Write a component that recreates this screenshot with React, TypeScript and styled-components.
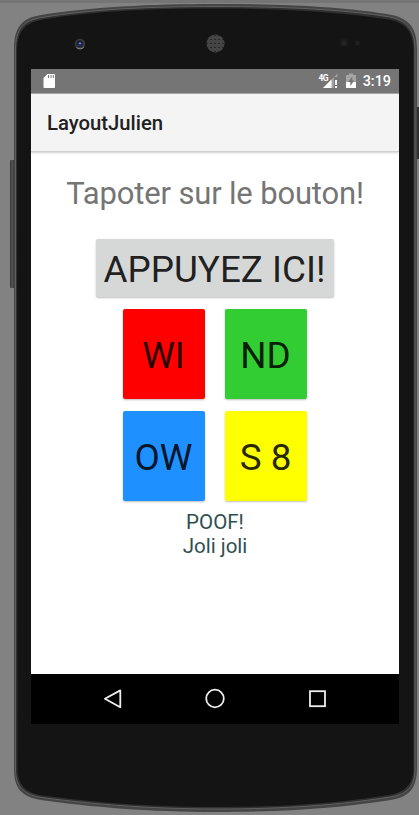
import React from 'react';
import styled, { createGlobalStyle } from 'styled-components';

const GlobalStyle = createGlobalStyle`
  * { box-sizing: border-box; }
  body { margin: 0; background: #828282; font-family: Roboto, sans-serif; }
`;

const Stage = styled.div`
  position: relative;
  width: 419px;
  height: 815px;
  padding: 69px 20px 0 31px;
  overflow: hidden;
  background: #828282;
`;

const DeviceArt = styled.svg`
  position: absolute;
  inset: 0;
`;

const Screen = styled.main`
  position: relative;
  display: flex;
  flex-direction: column;
  width: 368px;
  height: 655px;
  overflow: hidden;
  background: #fff;
`;

const StatusBar = styled.div`
  display: flex;
  align-items: center;
  justify-content: space-between;
  height: 25px;
  padding: 0 8px 0 12px;
  background: #757575;
  border-bottom: 1px solid #a5a5a5;
`;

const StatusGroup = styled.div`
  display: flex;
  align-items: center;
`;

const Clock = styled.span`
  margin-left: 7px;
  color: #fff;
  font-size: 14.4px;
  font-weight: 500;
  line-height: 24px;
  padding-top: 1px;
`;

const AppBar = styled.header`
  display: flex;
  align-items: center;
  height: 57px;
  padding: 1px 16px 0;
  background: #f4f4f4;
  box-shadow: 0 1px 0 #cfcfcf, 0 2px 2px #d0d0d0;
  clip-path: inset(0 0 -6px 0);
`;

const Title = styled.h1`
  margin: 0;
  color: #212121;
  font-size: 20.3px;
  font-weight: 500;
  white-space: nowrap;
`;

const Content = styled.section`
  display: flex;
  flex: 1;
  flex-direction: column;
  align-items: center;
  padding-top: 23px;
`;

const Prompt = styled.p`
  margin: 0 0 25px;
  color: #757575;
  font-size: 31px;
  line-height: 40px;
  letter-spacing: -0.17px;
  white-space: nowrap;
`;

const Button = styled.button<{ $color: string; $width: number; $height: number }>`
  width: ${p => p.$width}px;
  height: ${p => p.$height}px;
  padding: 5px 1px 0 0;
  border: 0;
  border-radius: 2px;
  background: ${p => p.$color};
  box-shadow: 0 1px 2px rgba(0, 0, 0, 0.25);
  color: rgba(0, 0, 0, 0.87);
  font: 400 36.8px/1 Roboto, sans-serif;
  white-space: nowrap;
`;

const TileGrid = styled.div`
  display: grid;
  grid-template-columns: 81.5px 82px;
  gap: 12px 20.5px;
  margin-top: 12px;
`;

const Message = styled.p`
  margin: 9px 0 0;
  color: #2f4f4f;
  font-size: 20.5px;
  line-height: 24px;
  text-align: center;
`;

const NavBar = styled.nav`
  display: flex;
  align-items: center;
  justify-content: space-between;
  height: 50px;
  padding: 0 70px 0 70px;
  background: #000;
`;

const BODY =
  'M14 49 C14 27 22 18 41 15 C90 7 150 4 216 4 C285 4 347 7 392 15 C410 19 417 29 417 49 V768 C417 787 410 797 391 800 C340 808 285 812 216 812 C150 812 90 807 41 800 C22 797 14 788 14 770 Z';
const RIM =
  'M15.5 50 C15.5 29 23 20.5 42 17.5 C92 9 150 6.5 216 6.5 C285 6.5 344 9.5 390 17 C408 21 415 31 415 50 V768 C415 786 408 794 390 797 C340 805 285 809 216 809 C150 809 90 804 42 797.5 C24 795 15.5 786 15.5 770 Z';
const FACE =
  'M17 52 C17 31 25 22.5 43 19.5 C94 11 150 8.5 216 8.5 C285 8.5 342 12 389 19.5 C407 23 413.5 33 413.5 52 V767 C413.5 784 406 792 389 795 C340 803 285 807 216 807 C150 807 90 802 43 795.5 C25 793 17.5 784 17.5 769 Z';

const Device = () => (
  <DeviceArt width="419" height="815" viewBox="0 0 419 815">
    <defs>
      <pattern id="mesh" width="4" height="4" patternUnits="userSpaceOnUse">
        <path d="M0 1h2M3 0v3M0 3h2" stroke="#6a6a6a" strokeWidth="0.9" />
      </pattern>
      <linearGradient id="key" x1="0" x2="1">
        <stop offset="0" stopColor="#333" />
        <stop offset="0.4" stopColor="#555" />
        <stop offset="1" stopColor="#303030" />
      </linearGradient>
    </defs>
    <rect width="419" height="3" fill="#757575" />
    <rect x="10" y="160" width="5" height="128" rx="1" fill="url(#key)" />
    <rect x="417" y="107" width="3" height="52" fill="#303030" />
    <path d={BODY} fill="#454545" />
    <path d={RIM} fill="#303030" stroke="#606060" strokeWidth="1" />
    <path d={FACE} fill="#141414" />
    <circle cx="80" cy="44" r="5.2" fill="#3c3c3c" />
    <path d="M76.5 47.5a5 5 0 0 0 7.5-.7" stroke="#8c8c8c" fill="none" />
    <circle cx="79.7" cy="43.7" r="3.4" fill="#20202b" />
    <circle cx="79.7" cy="43.9" r="2" fill="#25258a" />
    <circle cx="80" cy="43.4" r=".8" fill="#aaaad2" />
    <circle cx="215.5" cy="43.5" r="9.2" fill="#262626" />
    <circle cx="215.5" cy="43.5" r="9" fill="url(#mesh)" />
    <circle cx="344" cy="43" r="4" fill="#1c1c1c" />
    <circle cx="344" cy="43" r="2" fill="#252525" />
    <circle cx="357.5" cy="43" r="2.4" fill="#202020" />
  </DeviceArt>
);

const NetworkLabel = styled.span`
  align-self: flex-start;
  margin-top: 5px;
  margin-right: -5px;
  color: #fff;
  font: 700 8.5px/8px Roboto, sans-serif;
  letter-spacing: -0.8px;
`;

const SignalSvg = styled.svg`
  margin-right: 7px;
`;

const SdIcon = () => (
  <svg width="14" height="16" viewBox="0 0 14 16">
    <path d="M4.5 1H11q1 0 1 1v12q0 1-1 1H1.5q-1 0-1-1V5Z" fill="#fff" />
    <path d="M5.5 2v3M8 2v3M10.3 2v3" stroke="#757575" />
  </svg>
);

const SignalIcon = () => (
  <SignalSvg width="16" height="16" viewBox="0 0 16 16">
    <path d="M0 15 14.5 .5V4H11v11Z" fill="#a2a2a2" />
    <path d="M0 15 8.5 6.5V15Z" fill="#fff" />
    <path d="M13 7v5M13 13v2" stroke="#fff" strokeWidth="2" />
  </SignalSvg>
);

const BatteryIcon = () => (
  <svg width="10" height="16" viewBox="0 0 10 16">
    <path d="M0 2h3V.5h4V2h3v7H0Z" fill="#a5a5a5" />
    <path d="M0 9h10v6H0Z" fill="#fff" />
    <path d="M6.3 3.5 2 9h2.3v4l4-5.5h-2Z" fill="#757575" />
  </svg>
);

const tiles = [
  { label: 'WI', color: '#ff0000' },
  { label: 'ND', color: '#32cd32' },
  { label: 'OW', color: '#1e90ff' },
  { label: 'S 8', color: '#ffff00' },
];

export default function App() {
  return (
    <>
      <GlobalStyle />
      <Stage>
        <Device />
        <Screen>
          <StatusBar>
            <SdIcon />
            <StatusGroup>
              <NetworkLabel>4G</NetworkLabel>
              <SignalIcon />
              <BatteryIcon />
              <Clock>3:19</Clock>
            </StatusGroup>
          </StatusBar>
          <AppBar>
            <Title>LayoutJulien</Title>
          </AppBar>
          <Content>
            <Prompt>Tapoter sur le bouton!</Prompt>
            <Button $color="#d6d7d7" $width={238} $height={58}>APPUYEZ ICI!</Button>
            <TileGrid>
              {tiles.map(t => (
                <Button key={t.label} $color={t.color} $width={82} $height={90}>{t.label}</Button>
              ))}
            </TileGrid>
            <Message>POOF!<br />Joli joli</Message>
          </Content>
          <NavBar>
            <svg width="24" height="24" viewBox="0 0 24 24" fill="none" stroke="#eee" strokeWidth="1.8">
              <path d="M19.3 3.4v16.8L3.9 11.8Z" strokeLinejoin="round" />
            </svg>
            <svg width="24" height="24" viewBox="0 0 24 24" fill="none" stroke="#eee" strokeWidth="1.8">
              <circle cx="12" cy="11.5" r="8.8" />
            </svg>
            <svg width="24" height="24" viewBox="0 0 24 24" fill="none" stroke="#eee" strokeWidth="1.8">
              <rect x="5" y="4.2" width="15" height="15" />
            </svg>
          </NavBar>
        </Screen>
      </Stage>
    </>
  );
}
